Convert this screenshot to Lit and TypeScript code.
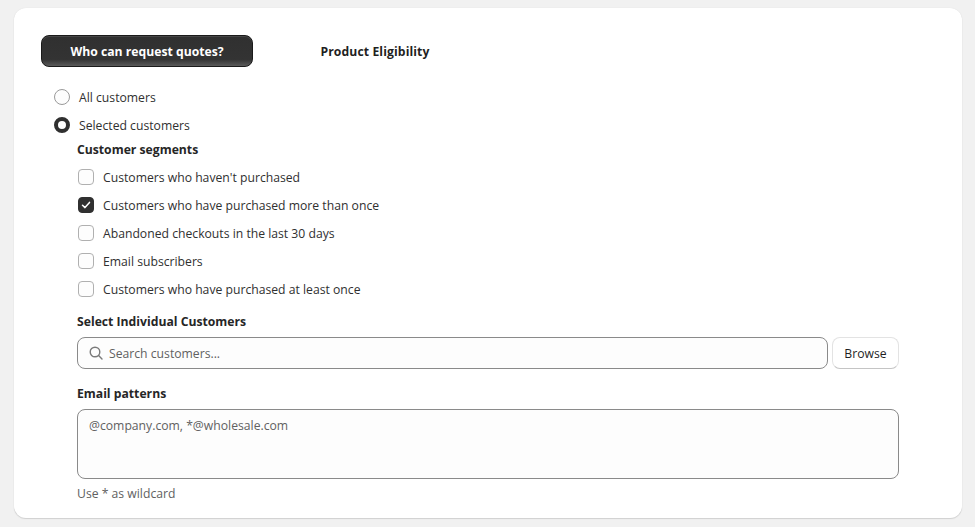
import { LitElement, html, css } from "lit";
import { customElement } from "lit/decorators.js";

const SEGMENTS = [
  { label: "Customers who haven't purchased", checked: false },
  { label: "Customers who have purchased more than once", checked: true },
  { label: "Abandoned checkouts in the last 30 days", checked: false },
  { label: "Email subscribers", checked: false },
  { label: "Customers who have purchased at least once", checked: false },
];

@customElement("app-root")
export class AppRoot extends LitElement {
  static styles = css`
    :host {
      display: block;
      height: 527px;
      box-sizing: border-box;
      padding: 8px 13px 9px 14px;
      background: #f1f1f1;
      font-family: "Open Sans", "Noto Sans", sans-serif;
      font-size: 12.2px;
      color: #303030;
      overflow: hidden;
    }

    * {
      box-sizing: border-box;
    }

    .card {
      height: 510px;
      background: #fff;
      border-radius: 12px;
      box-shadow: 0 1px 1px #d0d0d0, 0 0 1px #d8d8d8;
      padding: 27px 63px 0 27px;
    }

    /* Tabs */

    .tabs {
      display: grid;
      grid-template-columns: 212px 212px;
      gap: 16px;
      margin-bottom: 16px;
    }

    .tab {
      height: 32px;
      display: flex;
      align-items: center;
      justify-content: center;
      font-weight: 700;
      color: #1f1f1f;
      letter-spacing: 0.1px;
    }

    .tab--active {
      color: #fff;
      letter-spacing: 0;
      border: 1px solid #1a1a1a;
      border-radius: 8px;
      background: linear-gradient(#303030, #333 78%, #5a5a5a);
      box-shadow: inset 0 1px 0 #474747;
    }

    /* Radios */

    .radio-row {
      height: 28px;
      display: flex;
      align-items: center;
      padding-left: 13px;
    }

    .radio {
      width: 16px;
      height: 16px;
      border-radius: 50%;
      border: 1px solid #9a9a9a;
      background: #fdfdfd;
      margin-right: 9px;
    }

    .radio--on {
      border: 4.5px solid #303030;
      background: #fff;
    }

    .content {
      margin-top: 3px;
      padding-left: 36px;
    }

    .heading {
      font-weight: 700;
      color: #262626;
      line-height: 16px;
    }

    .segments {
      margin: 5px 0 11px;
    }

    .check-row {
      height: 28px;
      display: flex;
      align-items: center;
      padding-left: 1px;
    }

    .check {
      width: 16px;
      height: 16px;
      border-radius: 4px;
      border: 1px solid #b0b0b0;
      background: #fdfdfd;
      margin-right: 9px;
      display: flex;
      align-items: center;
      justify-content: center;
    }

    .check--on {
      background: #303030;
      border-color: #303030;
    }

    /* Fields */

    .search-row {
      display: flex;
      gap: 4px;
      margin: 7px 0 17px;
    }

    .search {
      flex: 1;
      height: 32px;
      display: flex;
      align-items: center;
      gap: 6px;
      padding-left: 11px;
      border: 1px solid #8a8a8a;
      border-radius: 8px;
      background: #fdfdfd;
    }

    .search input {
      flex: 1;
      min-width: 0;
      border: 0;
      padding: 0;
      outline: 0;
      background: transparent;
      font: inherit;
    }

    input::placeholder,
    textarea::placeholder {
      color: #616161;
      opacity: 1;
    }

    .browse {
      width: 67px;
      height: 32px;
      padding: 0;
      border: 1px solid #e3e3e3;
      border-bottom-color: #c4c4c4;
      border-radius: 8px;
      background: #fff;
      font: inherit;
      color: #1f1f1f;
    }

    textarea {
      display: block;
      width: 100%;
      height: 70px;
      margin-top: 7px;
      padding: 7px 11px;
      resize: none;
      outline: 0;
      border: 1px solid #8a8a8a;
      border-radius: 8px;
      background: #fdfdfd;
      font: inherit;
      line-height: 18px;
    }

    .hint {
      margin-top: 6px;
      line-height: 18px;
      color: #616161;
    }
  `;

  render() {
    return html`
      <div class="card">
        <div class="tabs">
          <div class="tab tab--active">Who can request quotes?</div>
          <div class="tab">Product Eligibility</div>
        </div>
        <div class="radio-row"><span class="radio"></span>All customers</div>
        <div class="radio-row"><span class="radio radio--on"></span>Selected customers</div>
        <div class="content">
          <div class="heading">Customer segments</div>
          <div class="segments">
            ${SEGMENTS.map(
              (s) => html`
                <div class="check-row">
                  <span class="check ${s.checked ? "check--on" : ""}">
                    ${s.checked
                      ? html`<svg width="10" height="10" viewBox="0 0 10 10" fill="none">
                          <path d="M1.5 5.2 4 7.6 8.5 2.4" stroke="#fff" stroke-width="1.5" stroke-linecap="round" stroke-linejoin="round" />
                        </svg>`
                      : ""}
                  </span>
                  ${s.label}
                </div>
              `,
            )}
          </div>
          <div class="heading">Select Individual Customers</div>
          <div class="search-row">
            <div class="search">
              <svg width="14" height="14" viewBox="0 0 14 14" fill="none" stroke="#7a7a7a" stroke-width="1.4" stroke-linecap="round">
                <circle cx="6" cy="6" r="4.8" />
                <path d="M9.6 9.6 13 13" />
              </svg>
              <input placeholder="Search customers..." />
            </div>
            <button class="browse">Browse</button>
          </div>
          <div class="heading">Email patterns</div>
          <textarea placeholder="@company.com, *@wholesale.com"></textarea>
          <div class="hint">Use * as wildcard</div>
        </div>
      </div>
    `;
  }
}
